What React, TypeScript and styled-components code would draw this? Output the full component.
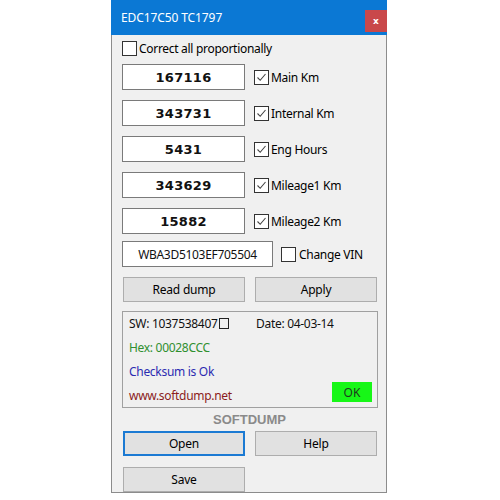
import React from "react";
import styled, { createGlobalStyle } from "styled-components";

const GlobalStyle = createGlobalStyle`
    html, body {
        margin: 0;
        padding: 0;
        background: #ffffff;
    }
    body {
        font-family: "Noto Sans", "Open Sans", sans-serif;
        font-size: 12px;
        color: #000;
    }
`;

const Page = styled.div`
    width: 500px;
    height: 500px;
    overflow: hidden;
    padding-left: 111px;
    box-sizing: border-box;
`;

const Window = styled.div`
    width: 276px;
    height: 493px;
    box-sizing: border-box;
    border: 1px solid #8c8c8c;
    border-top: none;
    background: #f0f0f0;
    display: flex;
    flex-direction: column;
`;

const TitleBar = styled.div`
    height: 35px;
    background: #0b78d4;
    display: flex;
    align-items: center;
    justify-content: space-between;
    padding-left: 10px;
    margin: 0 -1px;
`;

const Title = styled.span`
    color: #fff;
    font-size: 12px;
    letter-spacing: -0.1px;
`;

const CloseButton = styled.div`
    width: 22px;
    height: 22px;
    margin-top: 6px;
    background: #c9484a;
    color: #fff;
    font-family: "DejaVu Sans", sans-serif;
    font-size: 9px;
    font-weight: bold;
    display: flex;
    align-items: center;
    justify-content: center;
`;

const Body = styled.div`
    display: flex;
    flex-direction: column;
    padding: 4px 9px 0 10px;
`;

const Row = styled.div<{ $top: number; $height: number }>`
    display: flex;
    align-items: center;
    margin-top: ${({ $top }) => $top}px;
    height: ${({ $height }) => $height}px;
`;

const Box = styled.div`
    width: 13px;
    height: 13px;
    border: 1px solid #333;
    background: #fff;
    display: flex;
    align-items: center;
    justify-content: center;
    flex-shrink: 0;
`;

const Label = styled.span<{ $gap: number }>`
    margin-left: ${({ $gap }) => $gap}px;
    letter-spacing: -0.3px;
    white-space: nowrap;
`;

const NumberField = styled.div`
    width: 123px;
    height: 26px;
    box-sizing: border-box;
    border: 1px solid #7a7a7a;
    background: #fff;
    display: flex;
    align-items: center;
    justify-content: center;
    font-family: "DejaVu Sans", sans-serif;
    font-weight: bold;
    font-size: 13px;
    letter-spacing: 0.3px;
    color: #111;
    margin-right: 9px;
`;

const VinField = styled(NumberField)`
    width: 151px;
    font-family: "Noto Sans", sans-serif;
    font-weight: normal;
    font-size: 12px;
    letter-spacing: -0.3px;
    margin-right: 8px;
`;

const ButtonRow = styled.div<{ $top: number }>`
    display: flex;
    gap: 10px;
    margin-top: ${({ $top }) => $top}px;
    padding-left: 1px;
`;

const Button = styled.div<{ $focused?: boolean }>`
    width: 122px;
    height: 25px;
    box-sizing: border-box;
    background: #e1e1e1;
    border: ${({ $focused }) => ($focused ? "2px solid #1b7ad3" : "1px solid #adadad")};
    display: flex;
    align-items: center;
    justify-content: center;
    letter-spacing: -0.2px;
`;

const InfoBox = styled.div`
    margin-top: 9px;
    width: 256px;
    height: 97px;
    box-sizing: border-box;
    border: 1px solid #a0a0a0;
    padding: 0 5px 0 6px;
    display: flex;
    flex-direction: column;
    position: relative;
`;

const InfoLine = styled.div<{ $color: string }>`
    height: 25.5px;
    display: flex;
    align-items: center;
    color: ${({ $color }) => $color};
    letter-spacing: -0.3px;
    white-space: nowrap;
`;

const SwText = styled.span`
    width: 127px;
`;

const MissingGlyph = styled.span`
    display: inline-block;
    width: 8px;
    height: 9px;
    border: 1px solid #222;
    margin-left: 1px;
    vertical-align: -1px;
`;

const OkBadge = styled.div`
    position: absolute;
    right: 5px;
    bottom: 5px;
    width: 40px;
    height: 20px;
    background: #17f717;
    color: #1d3a1d;
    display: flex;
    align-items: center;
    justify-content: center;
    font-size: 12px;
`;

const Brand = styled.div`
    height: 20px;
    margin-top: 1px;
    display: flex;
    align-items: center;
    justify-content: center;
    font-family: "Liberation Sans", Arial, sans-serif;
    font-weight: bold;
    font-size: 13px;
    color: #8a8a8a;
`;

const CheckMark = () => (
    <svg width="11" height="11" viewBox="0 0 11 11">
        <path d="M1.5 5.5 L4.2 8.3 L9.5 2" fill="none" stroke="#444" strokeWidth="1.1" />
    </svg>
);

const CheckBox: React.FC<{ checked: boolean }> = ({ checked }) => (
    <Box>{checked && <CheckMark />}</Box>
);

interface Counter {
    value: string;
    label: string;
}

const counters: Counter[] = [
    { value: "167116", label: "Main Km" },
    { value: "343731", label: "Internal Km" },
    { value: "5431", label: "Eng Hours" },
    { value: "343629", label: "Mileage1 Km" },
    { value: "15882", label: "Mileage2 Km" },
];

const App: React.FC = () => (
    <Page>
        <GlobalStyle />
        <Window>
            <TitleBar>
                <Title>EDC17C50 TC1797</Title>
                <CloseButton>x</CloseButton>
            </TitleBar>
            <Body>
                <Row $top={0} $height={18}>
                    <CheckBox checked={false} />
                    <Label $gap={2}>Correct all proportionally</Label>
                </Row>
                {counters.map((c, i) => (
                    <Row key={c.label} $top={i === 0 ? 7 : 10} $height={26}>
                        <NumberField>{c.value}</NumberField>
                        <CheckBox checked />
                        <Label $gap={2}>{c.label}</Label>
                    </Row>
                ))}
                <Row $top={7} $height={26}>
                    <VinField>WBA3D5103EF705504</VinField>
                    <CheckBox checked={false} />
                    <Label $gap={3}>Change VIN</Label>
                </Row>
                <ButtonRow $top={10}>
                    <Button>Read dump</Button>
                    <Button>Apply</Button>
                </ButtonRow>
                <InfoBox>
                    <InfoLine $color="#111">
                        <SwText>
                            SW: 1037538407<MissingGlyph />
                        </SwText>
                        <span>Date: 04-03-14</span>
                    </InfoLine>
                    <InfoLine $color="#2f8f2f">Hex: 00028CCC</InfoLine>
                    <InfoLine $color="#2b2bb0">Checksum is Ok</InfoLine>
                    <InfoLine $color="#8b1c1c">www.softdump.net</InfoLine>
                    <OkBadge>OK</OkBadge>
                </InfoBox>
                <Brand>SOFTDUMP</Brand>
                <ButtonRow $top={2}>
                    <Button $focused>Open</Button>
                    <Button>Help</Button>
                </ButtonRow>
                <ButtonRow $top={11}>
                    <Button>Save</Button>
                </ButtonRow>
            </Body>
        </Window>
    </Page>
);

export default App;
